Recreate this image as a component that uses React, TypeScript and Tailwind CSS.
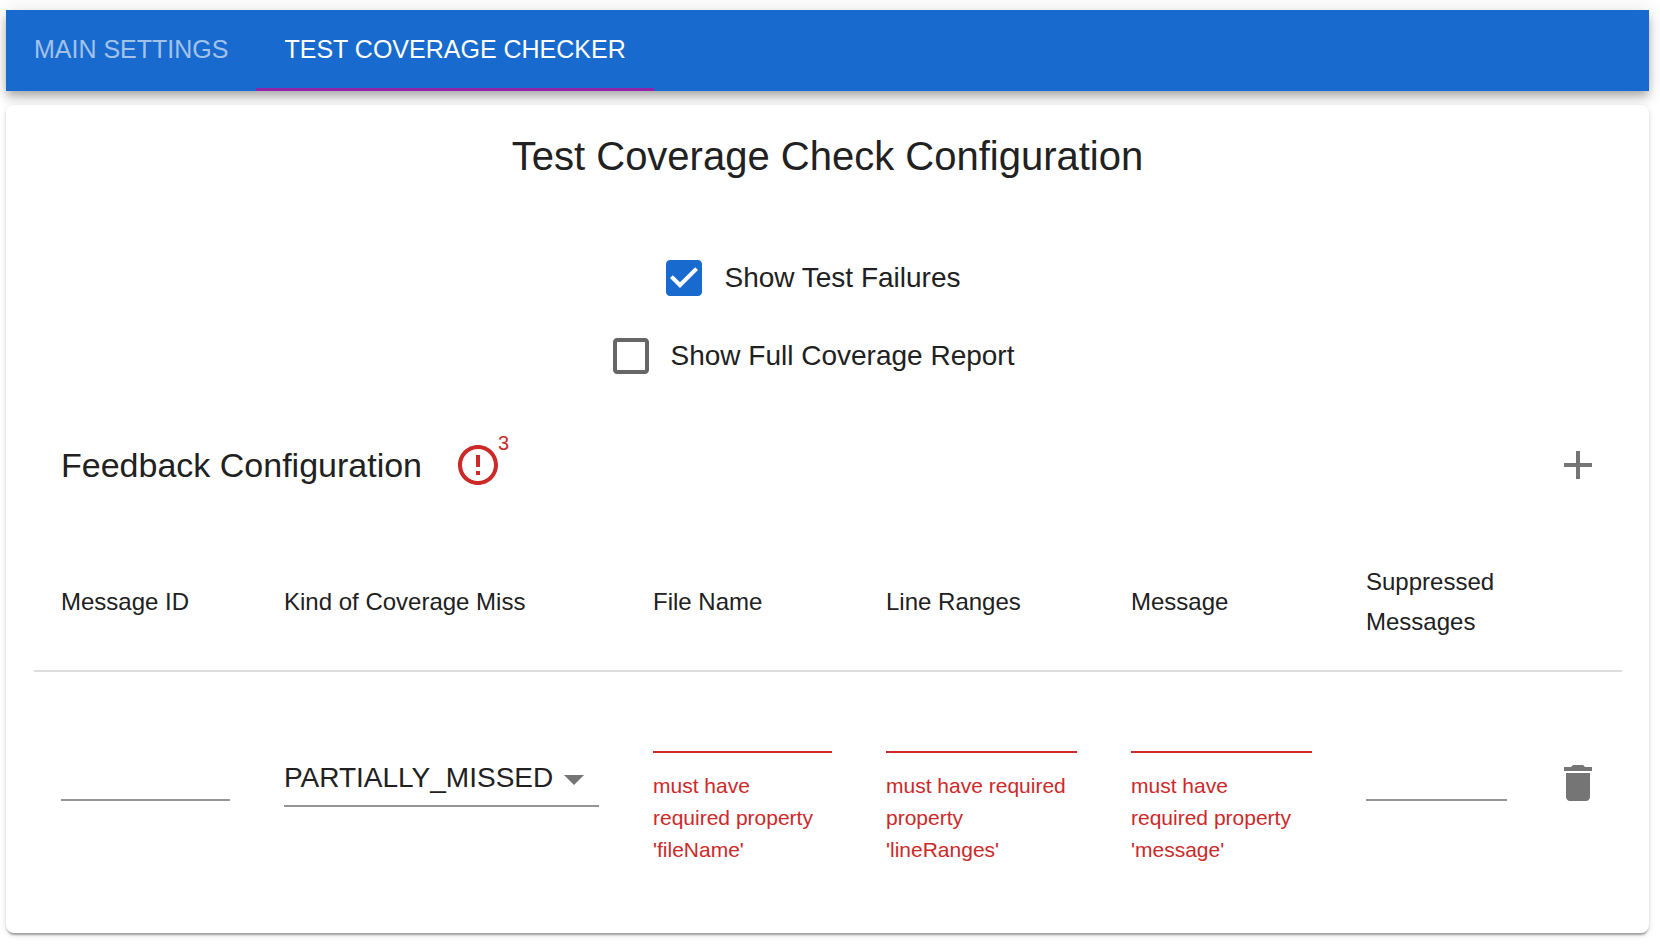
import React, { useState } from "react";

const PATHS = {
  checked:
    "M19 3H5c-1.11 0-2 .9-2 2v14c0 1.1.89 2 2 2h14c1.11 0 2-.9 2-2V5c0-1.1-.89-2-2-2zm-9 14l-5-5 1.41-1.41L10 14.17l7.59-7.59L19 8l-9 9z",
  unchecked:
    "M19 5v14H5V5h14m0-2H5c-1.1 0-2 .9-2 2v14c0 1.1.9 2 2 2h14c1.1 0 2-.9 2-2V5c0-1.1-.9-2-2-2z",
  error:
    "M11 15h2v2h-2zm0-8h2v6h-2zm.99-5C6.47 2 2 6.48 2 12s4.47 10 9.99 10C17.52 22 22 17.52 22 12S17.52 2 11.99 2zM12 20c-4.42 0-8-3.58-8-8s3.58-8 8-8 8 3.58 8 8-3.58 8-8 8z",
  add: "M19 13h-6v6h-2v-6H5v-2h6V5h2v6h6v2z",
  trash:
    "M6 19c0 1.1.9 2 2 2h8c1.1 0 2-.9 2-2V7H6v12zM19 4h-3.5l-1-1h-5l-1 1H5v2h14V4z",
  arrow: "M7 10l5 5 5-5z",
};

function Icon({ name, className = "" }: { name: keyof typeof PATHS; className?: string }) {
  return (
    <svg viewBox="0 0 24 24" aria-hidden="true" className={`size-12 shrink-0 fill-current ${className}`}>
      <path d={PATHS[name]} />
    </svg>
  );
}

function Tab({ label, active, onClick }: { label: string; active: boolean; onClick: () => void }) {
  return (
    <button
      type="button"
      role="tab"
      aria-selected={active}
      onClick={onClick}
      className={`border-b-3 px-7 pt-0.5 text-[25px] uppercase ${
        active ? "border-[#9023a8] text-white" : "border-transparent text-white/60"
      }`}
    >
      {label}
    </button>
  );
}

function Check({ label, initial }: { label: string; initial: boolean }) {
  const [on, setOn] = useState(initial);
  return (
    <label className="mr-5 flex h-[78px] cursor-pointer items-center gap-4 text-[28px]">
      <span className={`relative flex ${on ? "text-[#196ace]" : "text-[#666666]"}`}>
        <input
          type="checkbox"
          checked={on}
          onChange={(e) => setOn(e.target.checked)}
          className="absolute inset-0 cursor-pointer appearance-none"
        />
        <Icon name={on ? "checked" : "unchecked"} />
      </span>
      {label}
    </label>
  );
}

function Field({ label, error }: { label: string; error?: string }) {
  return (
    <div className={error ? "pt-[17px]" : ""}>
      <input
        type="text"
        aria-label={label}
        aria-invalid={!!error}
        className={`block h-9 w-full border-b-2 bg-transparent text-[28px] outline-none ${
          error ? "border-[#cc2929]" : "border-[#949494]"
        }`}
      />
      {error && <p className="mt-[17px] pr-1 text-[21px] leading-8 text-[#cc2929]">{error}</p>}
    </div>
  );
}

const COLUMNS = [
  "Message ID",
  "Kind of Coverage Miss",
  "File Name",
  "Line Ranges",
  "Message",
  "Suppressed Messages",
];

export default function App() {
  const [tab, setTab] = useState(1);
  return (
    <main className="bg-white pt-2.5 pr-[11px] pb-3.5 pl-1.5 font-['Liberation_Sans',Arial,sans-serif] text-[#212121]">
      <div
        role="tablist"
        className="flex h-[81px] bg-[#196ace] shadow-[0_4px_8px_-2px_rgba(0,0,0,0.2),0_8px_10px_0_rgba(0,0,0,0.14),0_2px_20px_0_rgba(0,0,0,0.12)]"
      >
        <Tab label="Main Settings" active={tab === 0} onClick={() => setTab(0)} />
        <Tab label="Test Coverage Checker" active={tab === 1} onClick={() => setTab(1)} />
      </div>

      <section className="relative mt-3.5 rounded-lg bg-white px-7 pt-6 pb-10 shadow-[0_4px_2px_-2px_rgba(0,0,0,0.2),0_2px_2px_0_rgba(0,0,0,0.14),0_2px_6px_0_rgba(0,0,0,0.12)]">
        <h1 className="text-center text-[40px] leading-[54px]">Test Coverage Check Configuration</h1>

        <div className="mt-14 flex flex-col items-center pr-3.5">
          <Check label="Show Test Failures" initial={true} />
          <Check label="Show Full Coverage Report" initial={false} />
        </div>

        <div className="mt-[22px] flex h-24 items-center pr-[19px] pl-[27px]">
          <h2 className="text-[34px]">Feedback Configuration</h2>
          <div className="relative ml-8 text-[#cc2929]">
            <Icon name="error" />
            <span className="absolute -top-2.5 left-11 text-xl leading-6">3</span>
          </div>
          <button type="button" aria-label="Add" className="ml-auto text-[#757575]">
            <Icon name="add" />
          </button>
        </div>

        <table className="mt-[21px] w-full table-fixed text-left">
          <colgroup>
            <col className="w-[223px]" />
            <col className="w-[369px]" />
            <col className="w-[233px]" />
            <col className="w-[245px]" />
            <col className="w-[235px]" />
            <col className="w-[195px]" />
            <col className="w-[88px]" />
          </colgroup>
          <thead>
            <tr className="h-[137px] border-b-2 border-[#dcdcdc] text-2xl leading-10">
              {COLUMNS.map((c) => (
                <th key={c} scope="col" className="px-[27px] font-normal">
                  {c}
                </th>
              ))}
              <th aria-label="Actions" />
            </tr>
          </thead>
          <tbody>
            <tr className="h-[222px]">
              <td className="px-[27px]">
                <Field label="Message ID" />
              </td>
              <td className="px-[27px]">
                <div className="relative">
                  <select
                    aria-label="Kind of Coverage Miss"
                    className="block h-12 w-full appearance-none border-b-2 border-[#949494] bg-transparent pb-2 text-[28px] leading-8 outline-none"
                  >
                    <option>PARTIALLY_MISSED</option>
                    <option>FULLY_MISSED</option>
                  </select>
                  <Icon name="arrow" className="pointer-events-none absolute right-px bottom-1 text-[#757575]" />
                </div>
              </td>
              <td className="px-[27px]">
                <Field label="File Name" error="must have required property 'fileName'" />
              </td>
              <td className="px-[27px]">
                <Field label="Line Ranges" error="must have required property 'lineRanges'" />
              </td>
              <td className="px-[27px]">
                <Field label="Message" error="must have required property 'message'" />
              </td>
              <td className="px-[27px]">
                <Field label="Suppressed Messages" />
              </td>
              <td className="px-5">
                <button type="button" aria-label="Delete" className="block text-[#757575]">
                  <Icon name="trash" />
                </button>
              </td>
            </tr>
          </tbody>
        </table>
      </section>
    </main>
  );
}
